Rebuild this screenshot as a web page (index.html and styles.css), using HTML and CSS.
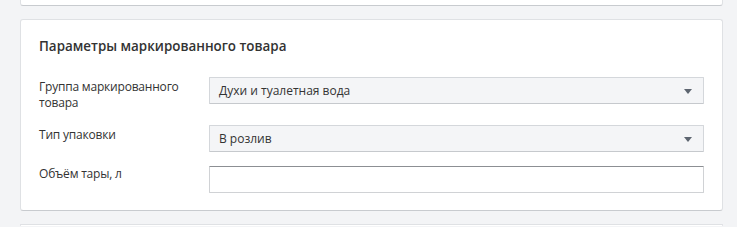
FILE: index.html
```html
<!DOCTYPE html>
<html lang="ru">
<head>
    <meta charset="UTF-8">
    <meta name="viewport" content="width=device-width, initial-scale=1.0">
    <title>Параметры маркированного товара</title>
    <link rel="stylesheet" href="styles.css">
</head>
<body>
    <div class="card card-prev"></div>

    <div class="card">
        <h3>Параметры маркированного товара</h3>

        <div class="field">
            <label>Группа маркированного товара</label>
            <div class="select"><span>Духи и туалетная вода</span></div>
        </div>

        <div class="field">
            <label>Тип упаковки</label>
            <div class="select"><span>В розлив</span></div>
        </div>

        <div class="field field-text">
            <label>Объём тары, л</label>
            <input type="text" class="input">
        </div>
    </div>

    <div class="card card-next"></div>
</body>
</html>
```

FILE: styles.css
```css
body {
    margin: 0;
    background: #f3f4f6;
    font-family: 'Open Sans', 'Noto Sans', sans-serif;
    font-size: 12px;
    color: #333;
}

.card {
    background: #fff;
    border: 1px solid #dfe1e4;
    border-bottom-color: #c8cbcf;
    border-radius: 3px;
    margin: 0 14px 13px 20px;
    padding: 17px 18px 17px 18px;
}

.card-prev {
    border-top: none;
    border-radius: 0 0 3px 3px;
    height: 5px;
    padding: 0;
}

.card-next {
    border-bottom: none;
    height: 1px;
    padding: 0;
    margin-bottom: 0;
}

h3 {
    margin: 0 0 22px 0;
    font-size: 13.4px;
    font-weight: 600;
    line-height: 18px;
}

.field {
    display: flex;
    margin-bottom: 14px;
}

.field:last-child {
    margin-bottom: 0;
}

.field label {
    width: 170px;
    flex-shrink: 0;
    padding-top: 2px;
    line-height: 16px;
    letter-spacing: -0.2px;
    padding-right: 20px;
    box-sizing: border-box;
}

.field-text label {
    padding-top: 0;
}

.select {
    flex: 1;
    position: relative;
    height: 27px;
    box-sizing: border-box;
    background: #f4f5f7;
    border: 1px solid #d4d7db;
    border-bottom-color: #c6c9cd;
    border-radius: 1px;
    padding: 0 30px 0 9px;
    line-height: 25px;
}

.select::after {
    content: "";
    position: absolute;
    right: 11px;
    top: 11px;
    border-left: 4px solid transparent;
    border-right: 4px solid transparent;
    border-top: 5px solid #5d6570;
}

.input {
    flex: 1;
    height: 27px;
    box-sizing: border-box;
    margin: 0;
    border: 1px solid #d0d2d5;
    border-top-color: #8c8f93;
    border-radius: 1px;
    background: #fff;
    font: inherit;
}
```
